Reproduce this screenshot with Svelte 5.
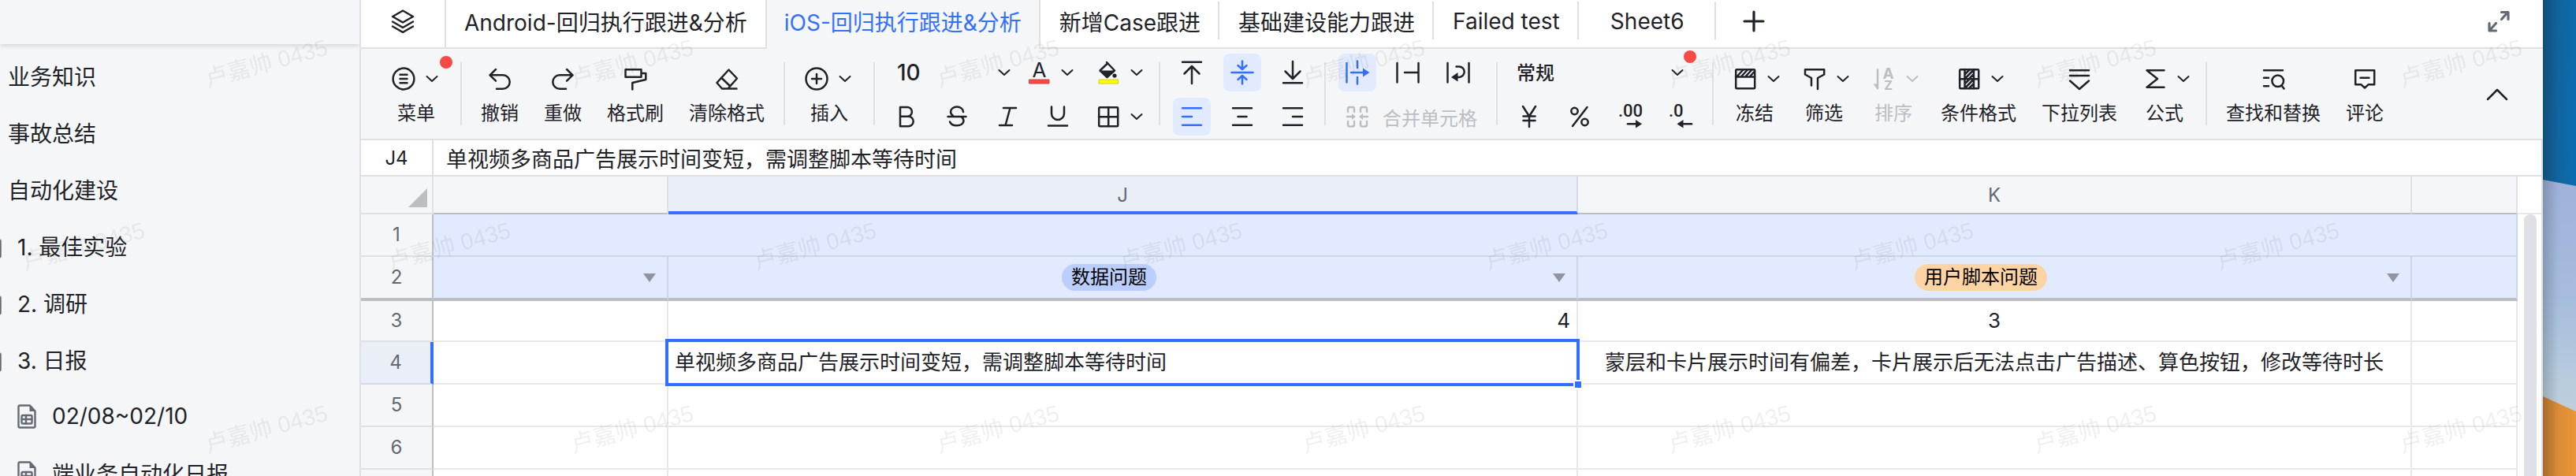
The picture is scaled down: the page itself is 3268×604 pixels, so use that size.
<script>
  const docs = [
    { label: '业务知识', kind: 'root' },
    { label: '事故总结', kind: 'root' },
    { label: '自动化建设', kind: 'root' },
    { label: '1. 最佳实验', kind: 'section' },
    { label: '2. 调研', kind: 'section' },
    { label: '3. 日报', kind: 'section' },
    { label: '02/08~02/10', kind: 'leaf' },
    { label: '端业务自动化日报', kind: 'leaf' }
  ];

  const tabs = [
    'Android-回归执行跟进&分析',
    'iOS-回归执行跟进&分析',
    '新增Case跟进',
    '基础建设能力跟进',
    'Failed test',
    'Sheet6'
  ];
  let activeTab = $state(1);

  let formula = $state('单视频多商品广告展示时间变短，需调整脚本等待时间');
  let cellName = $state('J4');
</script>

{#snippet chevron()}
  <svg class="chev" viewBox="0 0 24 24" aria-hidden="true"><path d="M5.500 9l6.500 6 6.500-6" /></svg>
{/snippet}

{#snippet sheetDoc()}
  <svg class="doc" viewBox="0 0 24 31" aria-hidden="true">
    <path d="M1.500 3a1.500 1.500 0 0 1 1.500-1.500h13l6.500 7V28a1.500 1.500 0 0 1-1.500 1.500H3A1.500 1.500 0 0 1 1.500 28z" />
    <path class="solid" d="M15.500 1l7.500 8h-7.500z" />
    <rect x="5.500" y="14" width="13" height="10.500" rx="1.500" />
    <path d="M5.500 19h13M11 14v10.500" />
  </svg>
{/snippet}

<div class="desktop">
  <div class="window">
    <aside class="sidebar">
      <div class="side-head"></div>
      <nav aria-label="文档目录">
        {#each docs as doc}
          <a href="#doc" class={doc.kind}>
            {#if doc.kind !== 'root'}{@render sheetDoc()}{/if}
            <span>{doc.label}</span>
          </a>
        {/each}
      </nav>
    </aside>

    <main>
      <div class="tabbar">
        <button class="layers" aria-label="工作表列表">
          <svg class="icon" viewBox="0 0 32 32"><path d="M16 2.500L29 10 16 17.500 3 10zM3 16.500L16 24l13-7.500M3 22.500L16 30l13-7.500" /></svg>
        </button>
        {#each tabs as tab, i}
          <button class="tab" class:active={i === activeTab} class:rule={i > activeTab} onclick={() => (activeTab = i)}>{tab}</button>
        {/each}
        <button class="add" aria-label="新建工作表">
          <svg class="icon" viewBox="0 0 32 32"><path class="heavy" d="M16 4v24M4 16h24" /></svg>
        </button>
        <button class="full" aria-label="全屏">
          <svg class="icon" viewBox="0 0 32 32"><path class="heavy" d="M19.500 13.500l8-9M19.500 4.500h8.500v9M12.500 18.500l-8 9M4 18.500V28h8.500" /></svg>
        </button>
      </div>

      <div class="toolbar">
        <div class="big">
          <button class="tool dotted">
            <span class="pair">
              <svg class="icon" viewBox="0 0 32 32"><circle cx="16" cy="16" r="13.400" /><path d="M11.500 10.700h9M11.500 16h9M11.500 21.300h9" /></svg>
              {@render chevron()}
            </span>
            菜单
          </button>
        </div>
        <div class="big">
          <button class="tool">
            <svg class="icon" viewBox="0 0 32 32"><path d="M11 4l-7.500 7.300 7.500 7.300M3.500 11.300H20a8.700 8.700 0 0 1 0 17.400h-8" /></svg>
            撤销
          </button>
          <button class="tool">
            <svg class="icon" viewBox="0 0 32 32"><path d="M21 4l7.500 7.300-7.500 7.300M28.500 11.300H12a8.700 8.700 0 0 0 0 17.400h8" /></svg>
            重做
          </button>
          <button class="tool">
            <svg class="icon" viewBox="0 0 32 32"><path d="M3.500 4.200h20v9.500h-20zM23.500 9h5.800v8L12.300 21v8.500" /></svg>
            格式刷
          </button>
          <button class="tool">
            <svg class="icon" viewBox="0 0 32 32"><path d="M18.500 4.500L29 15.500 17.500 28.500H10L3.500 21zM9 14.500l11.500 11M10 28.500h18.500" /></svg>
            清除格式
          </button>
        </div>
        <div class="big">
          <button class="tool">
            <span class="pair">
              <svg class="icon" viewBox="0 0 32 32"><circle cx="16" cy="16" r="13.500" /><path d="M16 10v12M10 16h12" /></svg>
              {@render chevron()}
            </span>
            插入
          </button>
        </div>

        <div class="small">
          <div class="line">
            <label class="pick size">
              <select aria-label="字号"><option>10</option><option>12</option></select>
              {@render chevron()}
            </label>
            <button class="split" aria-label="字体颜色">
              <svg class="icon" viewBox="0 0 32 32"><text x="16.500" y="22" font-size="26" text-anchor="middle">A</text><rect class="red" x="4" y="25" width="25" height="5" /></svg>
              {@render chevron()}
            </button>
            <button class="split gap" aria-label="填充颜色">
              <svg class="icon" viewBox="0 0 32 32"><path d="M14 3l10 10.500-9.500 8.500L5.500 13.500 14.500 5" /><path class="solid" d="M5 13.500h19.500L14.500 23z" /><circle class="solid" cx="24" cy="20" r="2.600" /><rect class="yellow" x="4.500" y="25" width="24" height="5" /></svg>
              {@render chevron()}
            </button>
          </div>
          <div class="line wide">
            <button class="sq" aria-label="加粗"><svg class="icon" viewBox="0 0 32 32"><path d="M8 4h9a5.900 5.900 0 0 1 0 11.800H8zM8 15.800h10.500a6.200 6.200 0 0 1 0 12.400H8z" /></svg></button>
            <button class="sq" aria-label="删除线"><svg class="icon" viewBox="0 0 32 32"><path d="M4.500 16h23M24 10a8 6.500 0 0 0-16 0c0 3 2 4.500 4 6M7 22.500a9 6.500 0 0 0 17.500-.500c0-3-1-4.500-3-6" /></svg></button>
            <button class="sq" aria-label="斜体"><svg class="icon" viewBox="0 0 32 32"><path d="M11 5h16M6 27h16M19.500 5l-6 22" /></svg></button>
            <button class="sq" aria-label="下划线"><svg class="icon" viewBox="0 0 32 32"><path d="M8 3.500V12a8 8 0 0 0 16 0V3.500M4 27.500h24" /></svg></button>
            <button class="split" aria-label="边框">
              <svg class="icon" viewBox="0 0 32 32"><rect x="4.200" y="4.200" width="24" height="24" rx="1" /><path d="M4 16.200h24M16.200 4v24" /></svg>
              {@render chevron()}
            </button>
          </div>
        </div>

        <div class="small">
          <div class="line wide">
            <button class="sq" aria-label="顶端对齐"><svg class="icon" viewBox="0 0 32 32"><path d="M4 2.700h24M16 30V8M6.500 17.500L16 8l9.500 9.500" /></svg></button>
            <button class="sq on" aria-label="垂直居中"><svg class="icon" viewBox="0 0 32 32"><path d="M2.500 16h27M16 1.500V12M10.500 7l5.500 5 5.500-5M16 30.500V20M10.500 25l5.500-5 5.500 5" /></svg></button>
            <button class="sq" aria-label="底端对齐"><svg class="icon" viewBox="0 0 32 32"><path d="M4 29.300h24M16 2v22M6.500 14.500L16 24l9.500-9.500" /></svg></button>
          </div>
          <div class="line wide">
            <button class="sq on" aria-label="左对齐"><svg class="icon" viewBox="0 0 32 32"><path d="M4 5.300h24M4 16h12M4 26.700h24" /></svg></button>
            <button class="sq" aria-label="居中对齐"><svg class="icon" viewBox="0 0 32 32"><path d="M4 5.300h24M10.500 16h11M4 26.700h24" /></svg></button>
            <button class="sq" aria-label="右对齐"><svg class="icon" viewBox="0 0 32 32"><path d="M4 5.300h24M16 16h12M4 26.700h24" /></svg></button>
          </div>
        </div>

        <div class="small merge-group">
          <div class="line wide">
            <button class="sq on" aria-label="溢出"><svg class="icon" viewBox="0 0 32 32"><path d="M2.500 4v24.500M16 1.500V10M16 22v8.500M8 16h16" /><path class="solid" d="M23 10.500l8.500 5.500-8.500 5.500z" /></svg></button>
            <button class="sq" aria-label="截断"><svg class="icon" viewBox="0 0 32 32"><path d="M2.500 4v24.500M29.500 4v24.500M12 16h17" /></svg></button>
            <button class="sq" aria-label="自动换行"><svg class="icon" viewBox="0 0 32 32"><path d="M2.500 4v24.500M29.500 4v24.500M13.500 8.500H17a6.700 6.700 0 0 1 0 13.400h-3" /><path class="solid" d="M15.500 16v11.500L7 22z" /></svg></button>
          </div>
          <button class="merge" disabled>
            <svg class="icon" viewBox="0 0 32 32"><path d="M4 10V6a2 2 0 0 1 2-2h4a2 2 0 0 1 2 2v4M4 22v4.500a2 2 0 0 0 2 2h4a2 2 0 0 0 2-2V22M20 10V6a2 2 0 0 1 2-2h4a2 2 0 0 1 2 2v4M20 22v4.500a2 2 0 0 0 2 2h4a2 2 0 0 0 2-2V22M3 16h7M29 16h-7" /><path class="solid" d="M9 12l5 4-5 4zM23 12l-5 4 5 4z" /></svg>
            合并单元格
          </button>
        </div>

        <div class="small">
          <label class="pick format">
            <select aria-label="数字格式"><option>常规</option><option>数字</option></select>
            {@render chevron()}
          </label>
          <div class="line wide">
            <button class="sq" aria-label="货币"><svg class="icon" viewBox="0 0 32 32"><path d="M8 3l8 12.500L24 3M16 15.500V29M8.500 15.500h15M8.500 21h15" /></svg></button>
            <button class="sq" aria-label="百分比"><svg class="icon" viewBox="0 0 32 32"><path d="M25.500 4L7 28" /><circle cx="9.500" cy="9" r="4.200" /><circle cx="22.500" cy="23" r="4.200" /></svg></button>
            <button class="sq" aria-label="增加小数位"><svg class="icon" viewBox="0 0 32 32"><text class="digits" x="1" y="16">.00</text><path d="M13 25.300h12" /><path class="solid" d="M23 20l8 5.300-8 5.300z" /></svg></button>
            <button class="sq" aria-label="减少小数位"><svg class="icon" viewBox="0 0 32 32"><text class="digits" x="1" y="16">.0</text><path d="M18 25.300h12" /><path class="solid" d="M19.500 20l-8 5.300 8 5.300z" /></svg></button>
          </div>
        </div>

        <div class="big">
          <button class="tool">
            <span class="pair snug">
              <svg class="icon" viewBox="0 0 32 32"><rect x="4.200" y="4.200" width="24" height="24" rx="1" /><path d="M4 13.500h24M6 12.500l7-7.500M11.500 12.500l7-7.500M17 12.500l7-7.500M22.500 12.500l5-5.500" /></svg>
              {@render chevron()}
            </span>
            冻结
          </button>
          <button class="tool">
            <span class="pair snug">
              <svg class="icon" viewBox="0 0 32 32"><path d="M12 24.500V15L4 10.500V4.200h24.200v6.300L20 15v14" /></svg>
              {@render chevron()}
            </span>
            筛选
          </button>
          <button class="tool" disabled>
            <span class="pair snug">
              <svg class="icon" viewBox="0 0 32 32"><path d="M8 4.500V28" /><path class="solid" d="M2.500 22.500H8V30z" /><text x="21.500" y="16" font-size="19" font-weight="700" text-anchor="middle">A</text><text x="21.500" y="30" font-size="16" font-weight="700" text-anchor="middle">Z</text></svg>
              {@render chevron()}
            </span>
            排序
          </button>
          <button class="tool">
            <span class="pair snug">
              <svg class="icon" viewBox="0 0 32 32"><rect x="4.200" y="4.200" width="24" height="24" rx="1" /><path d="M10.500 4v24M22 4v24M4 16.200h24M11 10l6-6M11 15.500L22 4.500M16 16l6-6M11 22l6-6M11 27.500L22 16.500M16 28l6-6" /></svg>
              {@render chevron()}
            </span>
            条件格式
          </button>
          <button class="tool">
            <svg class="icon" viewBox="0 0 32 32"><path d="M4 5.300h24M4 12h24M4 18.500l12 10.500 12-10.500" /></svg>
            下拉列表
          </button>
          <button class="tool">
            <span class="pair snug">
              <svg class="icon" viewBox="0 0 32 32"><path d="M27.500 5.300h-22L19 16 5.500 26.700h22" /></svg>
              {@render chevron()}
            </span>
            公式
          </button>
        </div>

        <div class="big last">
          <button class="tool">
            <svg class="icon" viewBox="0 0 32 32"><path d="M4 5.300h24M4 14.700h6M4 25.300h6M26.500 24.500l3 4" /><circle cx="21.700" cy="18.700" r="7.300" /></svg>
            查找和替换
          </button>
          <button class="tool">
            <svg class="icon" viewBox="0 0 32 32"><path d="M4.200 5.300h24v18h-7.700L16 27.500l-4.500-4.200H4.200zM10.500 14.700h11" /></svg>
            评论
          </button>
        </div>

        <button class="sq collapse" aria-label="收起工具栏"><svg class="icon" viewBox="0 0 32 32"><path d="M4 23l12-12 12 12" /></svg></button>
      </div>

      <div class="formula">
        <input class="name" aria-label="单元格名称" bind:value={cellName} />
        <input class="value" aria-label="编辑栏" bind:value={formula} />
      </div>

      <div class="sheet">
        <table>
          <colgroup><col class="c-head" /><col class="c-i" /><col class="c-j" /><col class="c-k" /><col /></colgroup>
          <thead>
            <tr>
              <th class="corner" aria-label="全选"><svg viewBox="0 0 24 24" aria-hidden="true"><path d="M24 0v24H0z" /></svg></th>
              <th></th><th class="sel">J</th><th>K</th><th></th>
            </tr>
          </thead>
          <tbody>
            <tr class="blue merged"><th>1</th><td colspan="4"></td></tr>
            <tr class="blue frozen">
              <th>2</th>
              <td><div class="filter"><i class="arrow"></i></div></td>
              <td><div class="filter"><span class="pill">数据问题</span><i class="arrow"></i></div></td>
              <td><div class="filter"><span class="pill orange">用户脚本问题</span><i class="arrow"></i></div></td>
              <td></td>
            </tr>
            <tr class="third"><th>3</th><td></td><td class="num">4</td><td class="mid">3</td><td></td></tr>
            <tr class="current"><th>4</th><td></td><td class="chosen">单视频多商品广告展示时间变短，需调整脚本等待时间<i class="ring"></i><i class="handle"></i></td><td class="mid">蒙层和卡片展示时间有偏差，卡片展示后无法点击广告描述、算色按钮，修改等待时长</td><td></td></tr>
            <tr><th>5</th><td></td><td></td><td></td><td></td></tr>
            <tr><th>6</th><td></td><td></td><td></td><td></td></tr>
            <tr><th></th><td></td><td></td><td></td><td></td></tr>
          </tbody>
        </table>
        <div class="scroll"><div class="scroll-top"></div><div class="thumb"></div></div>
      </div>
    </main>

    <svg class="stamp" aria-hidden="true">
      <defs>
        <pattern id="stamp" width="464" height="464" patternUnits="userSpaceOnUse">
          <text x="338" y="90" text-anchor="middle" transform="rotate(-15 338 80)">卢嘉帅 0435</text>
          <text x="106" y="322" text-anchor="middle" transform="rotate(-15 106 312)">卢嘉帅 0435</text>
        </pattern>
      </defs>
      <rect width="100%" height="100%" fill="url(#stamp)" />
    </svg>
  </div>

  <svg class="wallpaper" viewBox="0 0 42 604" preserveAspectRatio="none" aria-hidden="true">
    <defs>
      <linearGradient id="sea" x1="0" y1="0" x2="1" y2="0.300"><stop offset="0" stop-color="#155f92" /><stop offset="1" stop-color="#0b6cad" /></linearGradient>
      <linearGradient id="sky" x1="0" y1="0" x2="0" y2="1"><stop offset="0" stop-color="#9fb1d8" /><stop offset="0.400" stop-color="#a5bddd" /><stop offset="0.700" stop-color="#b9cddd" /><stop offset="1" stop-color="#ccd0dc" /></linearGradient>
      <linearGradient id="sand" x1="0" y1="0" x2="1" y2="0"><stop offset="0" stop-color="#cc8434" /><stop offset="1" stop-color="#ea9538" /></linearGradient>
      <linearGradient id="edge" x1="0" y1="0" x2="1" y2="0"><stop offset="0" stop-color="#000" stop-opacity="0.180" /><stop offset="1" stop-color="#000" stop-opacity="0" /></linearGradient>
    </defs>
    <rect width="42" height="604" fill="url(#sea)" />
    <path d="M0 228l42 8v368H0z" fill="url(#sky)" />
    <path d="M0 503l42 19v82H0z" fill="url(#sand)" />
    <rect width="20" height="604" fill="url(#edge)" />
  </svg>
</div>

<style>
  :global(body) {
    margin: 0;
    overflow: hidden;
  }

  .desktop {
    --ink: #1f2329;
    --grey: #646a73;
    --rule: #dee0e3;
    --dark-rule: #bbbfc4;
    --blue: #3370ff;
    --tint: #e1eaff;
    display: flex;
    height: 100vh;
    overflow: hidden;
    color: var(--ink);
    background: #fff;
    font-family: Inter, 'Noto Sans CJK SC', sans-serif;
    font-size: 28px;
  }

  .window {
    position: relative;
    display: flex;
    flex: 1;
    min-width: 0;
    overflow: hidden;
  }

  .wallpaper {
    flex: none;
    width: 42px;
    height: 100%;
  }

  .stamp {
    position: absolute;
    inset: 0;
    width: 100%;
    height: 100%;
    pointer-events: none;
  }

  .stamp text {
    font-family: 'Liberation Sans', 'Noto Sans CJK SC', sans-serif;
    font-size: 29px;
    fill: rgba(31, 35, 41, 0.07);
  }

  button,
  input,
  select {
    margin: 0;
    padding: 0;
    border: 0;
    border-radius: 0;
    background: none;
    color: inherit;
    font: inherit;
    outline: none;
  }

  /* Icons */
  .icon,
  .chev,
  .doc {
    display: block;
    flex: none;
    width: 32px;
    height: 32px;
    overflow: visible;
    fill: none;
    stroke: currentColor;
    stroke-width: 2.5;
    stroke-linecap: round;
    stroke-linejoin: round;
  }

  .chev {
    width: 24px;
    height: 24px;
    stroke-width: 2;
  }

  .doc {
    width: 24px;
    height: 31px;
    color: var(--grey);
    stroke-width: 2.4;
  }

  .heavy {
    stroke-width: 3.2;
  }

  .solid {
    fill: currentColor;
    stroke: none;
  }

  .icon text {
    fill: currentColor;
    stroke: none;
  }

  .icon .digits {
    font-family: Roboto, sans-serif;
    font-size: 22px;
    font-weight: 500;
  }

  .red {
    fill: #f54a45;
    stroke: #d8403c;
    stroke-width: 1;
  }

  .yellow {
    fill: #ffff00;
    stroke: #d4d400;
    stroke-width: 1;
  }

  /* Sidebar */
  .sidebar {
    flex: none;
    width: 456px;
    border-right: 2px solid var(--rule);
    background: #f5f6f8;
    overflow: hidden;
  }

  .side-head {
    height: 56px;
    margin-bottom: 4px;
    box-shadow: 0 2px 6px rgba(31, 35, 41, 0.16);
  }

  .sidebar a {
    display: flex;
    align-items: center;
    gap: 20px;
    height: 72px;
    color: inherit;
    text-decoration: none;
    white-space: nowrap;
  }

  .sidebar .root {
    padding-left: 10px;
  }

  .sidebar .section {
    margin-left: -22px;
  }

  .sidebar .leaf {
    padding-left: 22px;
  }

  main {
    display: flex;
    flex: 1;
    flex-direction: column;
    min-width: 0;
  }

  /* Sheet tabs */
  .tabbar {
    display: flex;
    flex: none;
    height: 62px;
    box-shadow: inset 0 -2px var(--rule);
  }

  .tabbar button {
    display: flex;
    align-items: center;
    justify-content: center;
    height: 60px;
    padding-bottom: 6px;
    white-space: nowrap;
  }

  .tabbar .layers {
    width: 108px;
    border-right: 2px solid var(--rule);
  }

  .tabbar .tab {
    position: relative;
    min-width: 174px;
    padding: 0 23px 6px;
  }

  .tabbar .rule {
    padding: 0 24px 6px;
  }

  .tabbar .active {
    height: 62px;
    padding: 0 22px 8px;
    border-right: 2px solid var(--rule);
    border-left: 2px solid var(--rule);
    background: #f5f6f8;
    color: var(--blue);
  }

  .tab.rule::after {
    position: absolute;
    top: 2px;
    right: 0;
    width: 2px;
    height: 48px;
    background: var(--rule);
    content: '';
  }

  .tabbar .add {
    width: 96px;
  }

  .tabbar .full {
    width: 48px;
    margin-right: 32px;
    margin-left: auto;
    color: var(--grey);
  }

  /* Toolbar */
  .toolbar {
    display: flex;
    flex: none;
    align-items: center;
    height: 114px;
    padding-left: 14px;
    border-bottom: 2px solid var(--rule);
    background: #f5f6f8;
  }

  .big,
  .small {
    position: relative;
    display: flex;
    flex: none;
    padding: 0 8px;
    border-right: 2px solid transparent;
  }

  .big:not(.last)::after,
  .small::after {
    position: absolute;
    top: 50%;
    right: -2px;
    width: 2px;
    height: 80px;
    margin-top: -40px;
    background: var(--rule);
    content: '';
  }

  .small {
    flex-direction: column;
    gap: 8px;
    padding: 2px 16px 0;
  }

  .merge-group {
    padding-right: 24px;
  }

  .tool {
    display: flex;
    flex-direction: column;
    gap: 12px;
    align-items: center;
    padding: 6px 16px 0;
    font-size: 24px;
    line-height: 32px;
    white-space: nowrap;
  }

  .tool:disabled,
  .merge:disabled {
    color: var(--dark-rule);
  }

  .dotted,
  .format {
    position: relative;
  }

  .dotted::after,
  .format::after {
    position: absolute;
    top: -7px;
    right: 2px;
    width: 16px;
    height: 16px;
    border-radius: 50%;
    background: #f54a45;
    content: '';
  }

  .format::after {
    top: -4px;
    right: 4px;
  }

  .pair {
    display: flex;
    gap: 8px;
    align-items: center;
  }

  .snug .chev {
    margin-right: -8px;
  }

  .line {
    display: flex;
    gap: 8px;
  }

  .wide {
    gap: 16px;
  }

  .sq {
    display: grid;
    place-items: center;
    width: 48px;
    height: 48px;
    border-radius: 8px;
  }

  .on {
    background: var(--tint);
    color: var(--blue);
  }

  .split {
    display: flex;
    gap: 8px;
    align-items: center;
    height: 48px;
    padding-left: 8px;
  }

  .gap {
    margin-left: 8px;
  }

  .pick {
    display: grid;
    align-items: center;
    height: 48px;
  }

  .pick > :global(*) {
    grid-area: 1 / 1;
  }

  .pick .chev {
    justify-self: end;
    pointer-events: none;
  }

  .pick select {
    width: 100%;
    appearance: none;
    font-weight: 500;
  }

  .size {
    width: 160px;
  }

  .size select {
    padding-left: 12px;
  }

  .format .chev {
    margin-right: 16px;
  }

  .format select {
    padding-left: 8px;
    font-size: 24px;
  }

  .merge {
    display: flex;
    gap: 16px;
    align-items: center;
    height: 48px;
    padding-left: 8px;
    font-size: 24px;
    white-space: nowrap;
  }

  .collapse {
    margin-right: 34px;
    margin-left: auto;
  }

  /* Formula bar */
  .formula {
    display: flex;
    flex: none;
    height: 44px;
    border-right: 2px solid var(--rule);
    border-bottom: 2px solid var(--rule);
  }

  .name {
    box-sizing: border-box;
    width: 92px;
    border-right: 2px solid var(--rule);
    font-size: 24px;
    text-align: center;
  }

  .value {
    flex: 1;
    min-width: 0;
    padding: 0 16px;
    font-size: 27px;
  }

  /* Grid */
  .sheet {
    display: flex;
    flex: 1;
    min-height: 0;
    overflow: hidden;
  }

  table {
    flex: 1;
    align-self: flex-start;
    width: 100%;
    min-width: 0;
    border-spacing: 0;
    table-layout: fixed;
    font-size: 26px;
    line-height: 36px;
  }

  .c-head {
    width: 92px;
  }

  .c-i {
    width: 298px;
  }

  .c-j {
    width: 1154px;
  }

  .c-k {
    width: 1058px;
  }

  th,
  td {
    box-sizing: border-box;
    height: 54px;
    padding: 0;
    border-right: 2px solid rgba(31, 35, 41, 0.1);
    border-bottom: 2px solid rgba(31, 35, 41, 0.1);
    white-space: nowrap;
  }

  th {
    border-color: var(--rule);
    background: #f5f6f8;
    color: var(--grey);
    font-size: 24px;
    font-weight: 400;
  }

  thead th {
    height: 48px;
    padding-top: 2px;
    border-bottom-color: var(--dark-rule);
  }

  thead .corner {
    padding-top: 0;
    border-bottom-color: var(--rule);
  }

  .corner svg {
    display: block;
    width: 24px;
    height: 24px;
    margin: 8px 6px 0 auto;
    fill: var(--dark-rule);
  }

  thead .sel {
    padding-top: 4px;
    border-right-color: #d3dae6;
    border-bottom: 4px solid var(--blue);
    background: #e9eef7;
  }

  tbody th {
    border-right-color: var(--dark-rule);
  }

  .blue td {
    background: var(--tint);
  }

  .frozen th,
  .frozen td {
    height: 56px;
    border-bottom: 4px solid var(--dark-rule);
  }

  .third th,
  .third td {
    height: 52px;
  }

  .current th {
    border-right: 4px solid var(--blue);
    border-bottom-color: #d3dae6;
    background: #e9eef7;
  }

  .filter {
    display: flex;
    gap: 4px;
    align-items: center;
    justify-content: flex-end;
    padding-right: 14px;
  }

  .pill {
    margin: 0 auto;
    padding: 0 12px;
    border-radius: 17px;
    background: #bacefd;
    color: #000;
    font-size: 24px;
    line-height: 34px;
  }

  .orange {
    background: #fed4a4;
  }

  .arrow {
    width: 0;
    height: 0;
    border-top: 11px solid #8f959e;
    border-right: 8px solid transparent;
    border-left: 8px solid transparent;
  }

  .num {
    padding-right: 8px;
    text-align: right;
  }

  .mid {
    text-align: center;
  }

  .chosen {
    position: relative;
    padding-left: 8px;
  }

  .ring {
    position: absolute;
    inset: -4px;
    border: 4px solid var(--blue);
  }

  .handle {
    position: absolute;
    right: -8px;
    bottom: -8px;
    width: 8px;
    height: 8px;
    border: 2px solid #fff;
    background: var(--blue);
  }

  .scroll {
    display: flex;
    flex: none;
    flex-direction: column;
    width: 30px;
    border-right: 2px solid var(--rule);
  }

  .scroll-top {
    flex: none;
    height: 46px;
    border-bottom: 2px solid #e8e9eb;
  }

  .thumb {
    flex: 1;
    width: 16px;
    margin-left: 8px;
    border-radius: 8px 8px 0 0;
    background: var(--rule);
  }
</style>
